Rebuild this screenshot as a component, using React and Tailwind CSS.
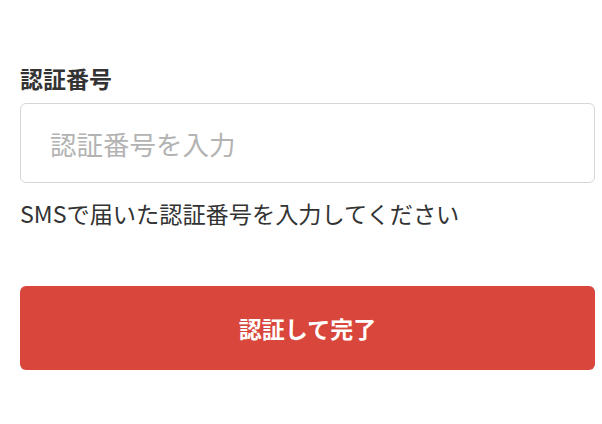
export default function App() {
  return (
    <div
      className="w-[602px] h-[424px] bg-white pl-5 pr-[7px] pt-[63px]"
      style={{ fontFamily: '"Noto Sans CJK JP", "Noto Sans", sans-serif' }}
    >
      <label className="block text-[23px] leading-[30px] font-bold text-[#333333]">
        認証番号
      </label>
      <input
        type="text"
        placeholder="認証番号を入力"
        className="mt-[10px] block w-full h-[80px] rounded-[6px] border border-[#d6d6d6] bg-white px-[29px] text-[26.5px] text-[#333333] placeholder:text-[#b3b3b3] outline-none"
      />
      <p className="mt-[14px] text-[23.2px] leading-[32px] text-[#333333]">
        SMSで届いた認証番号を入力してください
      </p>
      <button
        type="button"
        className="mt-[57px] flex w-full h-[84px] items-center justify-center rounded-[6px] bg-[#d9463b] text-[23px] font-semibold text-white"
      >
        認証して完了
      </button>
    </div>
  );
}
